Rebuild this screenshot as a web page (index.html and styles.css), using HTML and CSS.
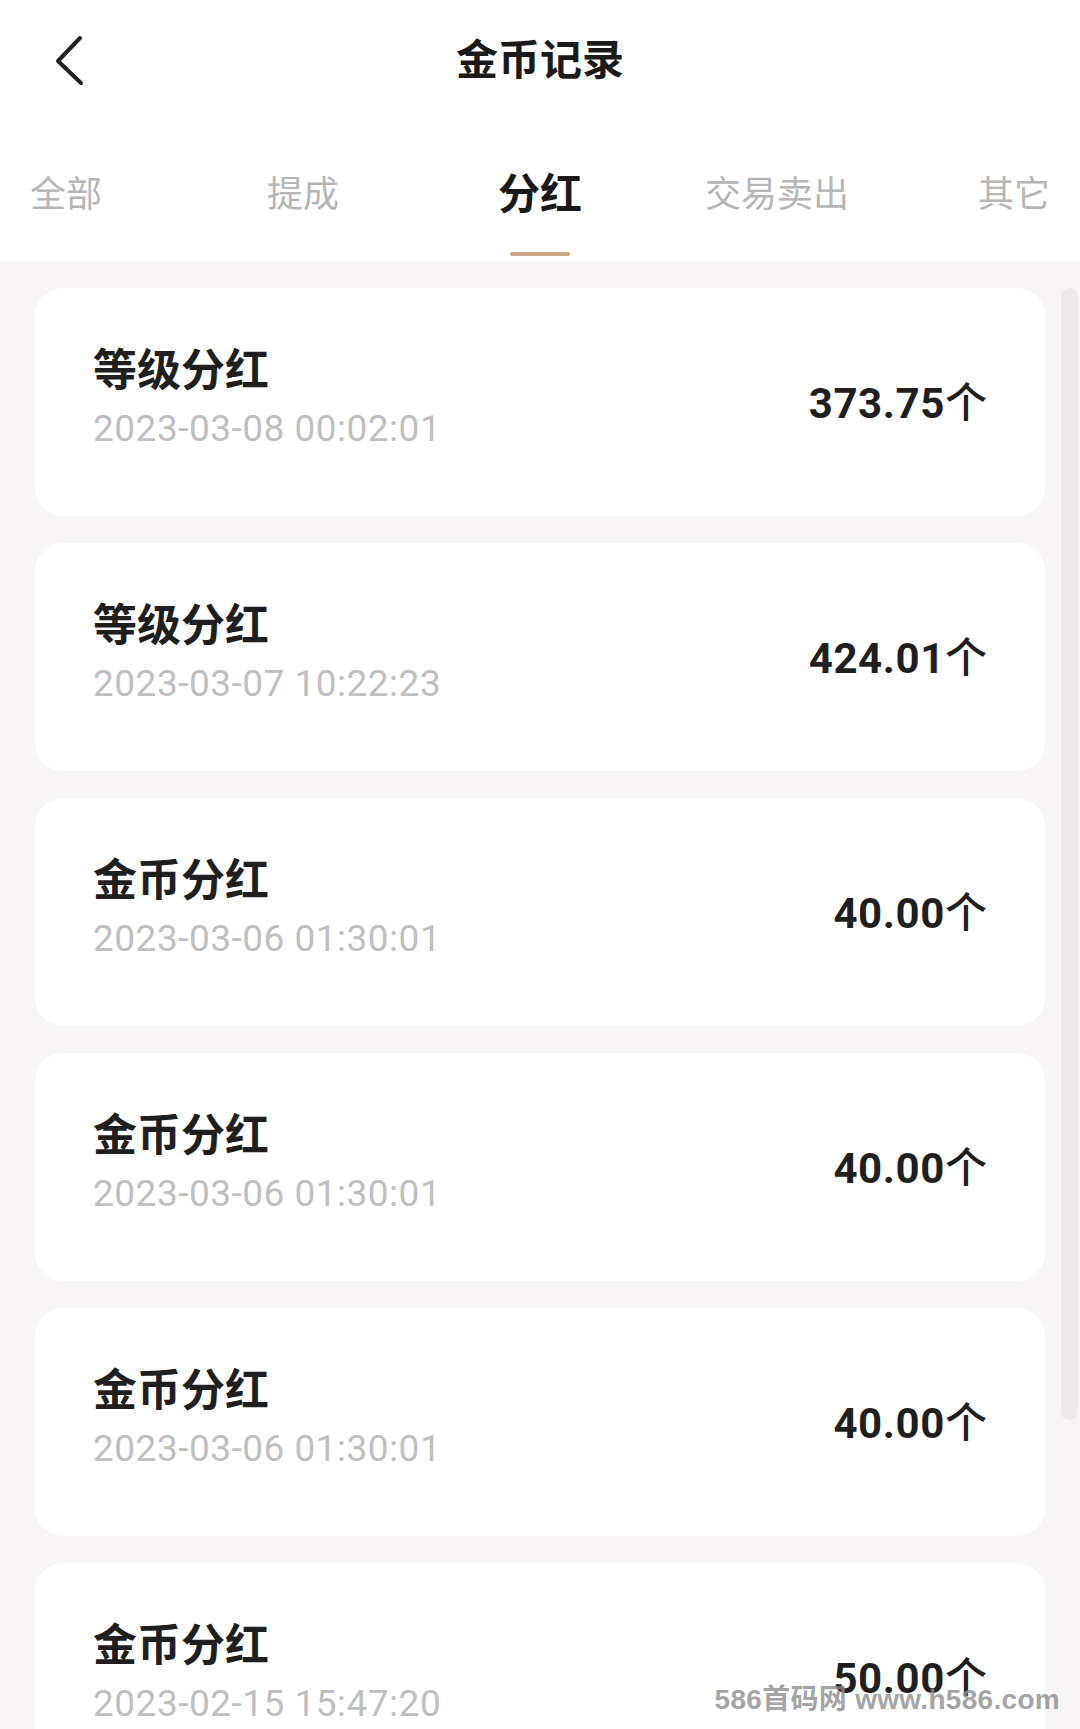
FILE: index.html
```html
<!DOCTYPE html>
<html>
<head>
  <meta charset="utf-8">
  <title>金币记录</title>
  <link rel="stylesheet" href="styles.css">
</head>
<body>
  <div class="header">
    <div class="nav">
      <div class="back">
        <svg width="40" height="60" viewBox="0 0 40 60">
          <polyline points="30,11 8,34 31,56" fill="none" stroke="#222" stroke-width="4" stroke-linecap="round" stroke-linejoin="round"/>
        </svg>
      </div>
      <div class="title">金币记录</div>
      <div></div>
    </div>

    <div class="tabs">
      <div class="tab">全部</div>
      <div class="tab">提成</div>
      <div class="tab active">分红</div>
      <div class="tab">交易卖出</div>
      <div class="tab">其它</div>
    </div>
  </div>

  <div class="list">
    <div class="card">
      <div class="info">
        <div class="name">等级分红</div>
        <div class="time">2023-03-08 00:02:01</div>
      </div>
      <div class="amount">373.75<span class="unit">个</span></div>
    </div>

    <div class="card">
      <div class="info">
        <div class="name">等级分红</div>
        <div class="time">2023-03-07 10:22:23</div>
      </div>
      <div class="amount">424.01<span class="unit">个</span></div>
    </div>

    <div class="card">
      <div class="info">
        <div class="name">金币分红</div>
        <div class="time">2023-03-06 01:30:01</div>
      </div>
      <div class="amount">40.00<span class="unit">个</span></div>
    </div>

    <div class="card">
      <div class="info">
        <div class="name">金币分红</div>
        <div class="time">2023-03-06 01:30:01</div>
      </div>
      <div class="amount">40.00<span class="unit">个</span></div>
    </div>

    <div class="card">
      <div class="info">
        <div class="name">金币分红</div>
        <div class="time">2023-03-06 01:30:01</div>
      </div>
      <div class="amount">40.00<span class="unit">个</span></div>
    </div>

    <div class="card">
      <div class="info">
        <div class="name">金币分红</div>
        <div class="time">2023-02-15 15:47:20</div>
      </div>
      <div class="amount">50.00<span class="unit">个</span></div>
    </div>
  </div>

  <!-- scroll indicator and watermark sit over the list -->
  <div class="scrollbar"></div>
  <div class="watermark">586首码网 www.h586.com</div>
</body>
</html>
```

FILE: styles.css
```css
html, body {
  height: 100%;
  overflow: hidden;
}

body {
  margin: 0;
  background: #f8f5f7;
  font-family: "Noto Sans CJK SC", sans-serif;
  color: #1f1f1f;
  position: relative;
}

.header {
  background: #fff;
}

.nav {
  height: 120px;
  padding-bottom: 6px;
  box-sizing: border-box;
  display: grid;
  grid-template-columns: 1fr auto 1fr;
  align-items: center;
}

.back {
  padding-left: 50px;
  display: flex;
  align-items: center;
}

.title {
  font-size: 42px;
  font-weight: bold;
  line-height: 1;
  color: #1a1a1a;
}

.tabs {
  height: 141px;
  display: flex;
  justify-content: center;
  overflow: hidden;
}

.tab {
  flex: 0 0 237px;
  display: flex;
  flex-direction: column;
  align-items: center;
  padding-top: 48px;
  font-size: 36px;
  line-height: 46px;
  color: #b6b6b6;
  white-space: nowrap;
}

.tab.active {
  font-size: 42px;
  font-weight: bold;
  color: #1a1a1a;
}

.tab.active::after {
  content: "";
  width: 60px;
  height: 4px;
  margin-top: 38px;
  border-radius: 2px;
  background: #c9a481;
}

.list {
  padding: 27px 35px 0;
}

.card {
  height: 228px;
  margin-bottom: 27px;
  padding: 0 58px;
  box-sizing: border-box;
  background: #fff;
  border-radius: 28px;
  display: flex;
  justify-content: space-between;
  align-items: center;
}

.info {
  margin-bottom: 13px;
}

.name {
  font-size: 44px;
  font-weight: bold;
  line-height: 55px;
  color: #1f1f1f;
}

.time {
  margin-top: 12px;
  font-family: Roboto, "Noto Sans CJK SC", sans-serif;
  font-size: 37px;
  line-height: 44px;
  letter-spacing: 0.5px;
  color: #bfbfbf;
}

.amount {
  font-family: Roboto, "Noto Sans CJK SC", sans-serif;
  font-size: 42px;
  font-weight: bold;
  line-height: 1;
  letter-spacing: 0.6px;
  color: #1f1f1f;
}

.unit {
  font-family: "Noto Sans CJK SC", sans-serif;
  font-weight: 500;
  letter-spacing: 0;
}

.scrollbar {
  position: absolute;
  top: 288px;
  right: 2px;
  width: 17px;
  height: 1132px;
  border-radius: 9px;
  background: #ebe9eb;
}

.watermark {
  position: absolute;
  right: 20px;
  bottom: 15px;
  font-family: "Liberation Sans", "Noto Sans CJK SC", sans-serif;
  font-size: 28px;
  font-weight: bold;
  line-height: 28px;
  letter-spacing: 0.3px;
  color: rgba(140, 140, 140, 0.8);
}
```
